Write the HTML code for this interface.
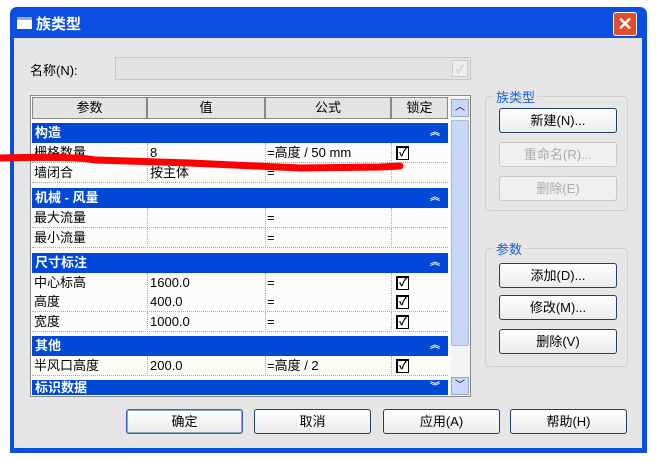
<!DOCTYPE html><html><head><meta charset="utf-8"><style>
*{margin:0;padding:0;box-sizing:border-box}
body{width:667px;height:471px;background:#fff;position:relative;overflow:hidden;font-family:"Liberation Sans","Noto Sans CJK SC",sans-serif;font-size:13px;color:#000}
.a{position:absolute}
.win{left:10px;top:7px;width:637px;height:446px;background:#0a4fe0;border-radius:7px 7px 0 0}
.client{left:14px;top:38px;width:628px;height:410px;background:#e6e6e6}
.title{left:36px;top:13px;color:#fff;font-weight:bold;font-size:15px}
.btn{position:absolute;height:25px;border:1px solid #1f3f6a;border-radius:3px;background:linear-gradient(#fff,#ececec);text-align:center;line-height:23px;font-size:13px}
.dis{border-color:#c8c8c8;color:#aaa;background:#f0f0f0}
.grp{position:absolute;border:1px solid #d0d0d0;border-radius:4px}
.gl{position:absolute;background:#e6e6e6;color:#1a5ee0;padding:0 2px;font-size:13px}
.row{position:absolute;left:32px;width:416px;height:20px;background:#fcfcfc;border-bottom:1px dotted #aaa}
.row span{position:absolute;top:0;height:19px;line-height:19px;font-size:13px;white-space:nowrap}
.vl{position:absolute;top:0;height:20px;border-left:1px dotted #aaa}
.band{position:absolute;left:32px;width:416px;height:20px;background:#0048d8;color:#fff;font-weight:bold;font-size:13px;line-height:20px;padding-left:3px}
.band i{position:absolute;right:8px;font-style:normal;font-size:10px}
.cb{position:absolute;left:364px;top:3px;width:13px;height:14px;border:1px solid #000;border-top-width:2px;border-left-width:2px;font-size:11px;line-height:11px;text-align:center;font-weight:bold}
.hd{position:absolute;top:97px;height:22px;background:#e4e4e4;border:1px solid #888;text-align:center;line-height:20px}
</style></head><body>
<div class="a win"></div>
<div class="a client"></div>
<div class="a" style="left:17px;top:17px;width:15px;height:12px;background:#fff;border-top:3px solid #9ac"></div>
<div class="a title">族类型</div>
<div class="a" style="left:613px;top:12px;width:24px;height:24px;background:#e0502a;border:1px solid #fff;border-radius:3px;color:#fff;font-weight:bold;font-size:18px;line-height:22px;text-align:center">✕</div>
<div class="a" style="left:30px;top:60px">名称(N):</div>
<div class="a" style="left:115px;top:57px;width:356px;height:23px;border:1px solid #c8c8c8;background:#e2e2e2"></div>
<div class="a" style="left:452px;top:60px;width:16px;height:17px;border:1px solid #ccc;background:#eee;color:#bbb;font-size:11px;text-align:center">✓</div>

<div class="a" style="left:30px;top:95px;width:441px;height:302px;border:1px solid #888;background:#fcfcfc"></div>
<div class="hd" style="left:32px;width:115px">参数</div>
<div class="hd" style="left:147px;width:118px">值</div>
<div class="hd" style="left:265px;width:126px">公式</div>
<div class="hd" style="left:391px;width:57px">锁定</div>
<div class="a" style="left:450px;top:97px;width:20px;height:299px;background:#f4f4f4"></div>
<div class="a" style="left:451px;top:99px;width:18px;height:18px;background:#c8d8f8;border:1px solid #9ab;font-size:10px;text-align:center;line-height:16px">︿</div>
<div class="a" style="left:451px;top:120px;width:18px;height:226px;background:#c8d6f8;border:1px solid #a8b8e0;border-radius:2px"></div>
<div class="a" style="left:451px;top:377px;width:18px;height:18px;background:#c8d8f8;border:1px solid #9ab;font-size:10px;text-align:center;line-height:16px">﹀</div>

<div class="band" style="top:123px">构造<i>︽</i></div>
<div class="row" style="top:143px"><span style="left:2px">栅格数量</span><div class="vl" style="left:115px"></div><span style="left:118px">8</span><div class="vl" style="left:233px"></div><span style="left:235px">=高度 / 50 mm</span><div class="vl" style="left:359px"></div><div class="cb">✓</div></div>
<div class="row" style="top:163px"><span style="left:2px">墙闭合</span><div class="vl" style="left:115px"></div><span style="left:118px">按主体</span><div class="vl" style="left:233px"></div><span style="left:235px">=</span><div class="vl" style="left:359px"></div></div>
<div class="band" style="top:188px">机械 - 风量<i>︽</i></div>
<div class="row" style="top:208px"><span style="left:2px">最大流量</span><div class="vl" style="left:115px"></div><div class="vl" style="left:233px"></div><span style="left:235px">=</span><div class="vl" style="left:359px"></div></div>
<div class="row" style="top:228px"><span style="left:2px">最小流量</span><div class="vl" style="left:115px"></div><div class="vl" style="left:233px"></div><span style="left:235px">=</span><div class="vl" style="left:359px"></div></div>
<div class="band" style="top:253px">尺寸标注<i>︽</i></div>
<div class="row" style="top:273px"><span style="left:2px">中心标高</span><div class="vl" style="left:115px"></div><span style="left:118px">1600.0</span><div class="vl" style="left:233px"></div><span style="left:235px">=</span><div class="vl" style="left:359px"></div><div class="cb">✓</div></div>
<div class="row" style="top:292px"><span style="left:2px">高度</span><div class="vl" style="left:115px"></div><span style="left:118px">400.0</span><div class="vl" style="left:233px"></div><span style="left:235px">=</span><div class="vl" style="left:359px"></div><div class="cb">✓</div></div>
<div class="row" style="top:312px"><span style="left:2px">宽度</span><div class="vl" style="left:115px"></div><span style="left:118px">1000.0</span><div class="vl" style="left:233px"></div><span style="left:235px">=</span><div class="vl" style="left:359px"></div><div class="cb">✓</div></div>
<div class="band" style="top:336px">其他<i>︽</i></div>
<div class="row" style="top:356px"><span style="left:2px">半风口高度</span><div class="vl" style="left:115px"></div><span style="left:118px">200.0</span><div class="vl" style="left:233px"></div><span style="left:235px">=高度 / 2</span><div class="vl" style="left:359px"></div><div class="cb">✓</div></div>
<div class="band" style="top:380px;height:15px;line-height:15px;overflow:hidden">标识数据<i>︾</i></div>

<svg class="a" style="left:0;top:0" width="667" height="471"><path d="M0 158 C40 157 80 157 95 160 L190 163 L300 168 L380 167 L400 166" stroke="#f00" stroke-width="7" fill="none" stroke-linecap="round"/></svg>

<div class="grp" style="left:485px;top:96px;width:143px;height:115px"></div>
<div class="gl" style="left:494px;top:87px">族类型</div>
<div class="btn" style="left:499px;top:108px;width:118px">新建(N)...</div>
<div class="btn dis" style="left:499px;top:142px;width:118px">重命名(R)...</div>
<div class="btn dis" style="left:499px;top:176px;width:118px">删除(E)</div>
<div class="grp" style="left:485px;top:248px;width:143px;height:119px"></div>
<div class="gl" style="left:494px;top:239px">参数</div>
<div class="btn" style="left:499px;top:263px;width:118px">添加(D)...</div>
<div class="btn" style="left:499px;top:295px;width:118px">修改(M)...</div>
<div class="btn" style="left:499px;top:329px;width:118px">删除(V)</div>

<div class="btn" style="left:126px;top:409px;width:117px;border-color:#3a5fbf;box-shadow:inset 0 0 0 1px #8ab">确定</div>
<div class="btn" style="left:254px;top:409px;width:117px">取消</div>
<div class="btn" style="left:383px;top:409px;width:117px">应用(A)</div>
<div class="btn" style="left:510px;top:409px;width:117px">帮助(H)</div>
</body></html>
